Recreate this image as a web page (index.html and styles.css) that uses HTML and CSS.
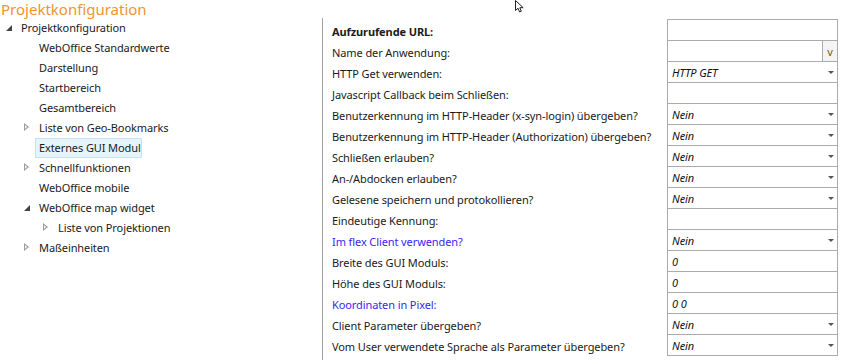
FILE: index.html
```html
<!DOCTYPE html>
<html lang="de">
<head>
<meta charset="utf-8">
<title>Projektkonfiguration</title>
<link rel="stylesheet" href="styles.css">
</head>
<body>
<div class="app">
  <h1 class="title">Projektkonfiguration</h1>
  <div class="main">
    <ul class="tree">
      <li class="node l0"><span class="exp open"></span><span class="lbl">Projektkonfiguration</span></li>
      <li class="node l1"><span class="exp"></span><span class="lbl">WebOffice Standardwerte</span></li>
      <li class="node l1"><span class="exp"></span><span class="lbl">Darstellung</span></li>
      <li class="node l1"><span class="exp"></span><span class="lbl">Startbereich</span></li>
      <li class="node l1"><span class="exp"></span><span class="lbl">Gesamtbereich</span></li>
      <li class="node l1"><span class="exp closed"></span><span class="lbl">Liste von Geo-Bookmarks</span></li>
      <li class="node l1"><span class="exp"></span><span class="lbl sel">Externes GUI Modul</span></li>
      <li class="node l1"><span class="exp closed"></span><span class="lbl">Schnellfunktionen</span></li>
      <li class="node l1"><span class="exp"></span><span class="lbl">WebOffice mobile</span></li>
      <li class="node l1"><span class="exp open"></span><span class="lbl">WebOffice map widget</span></li>
      <li class="node l2"><span class="exp closed"></span><span class="lbl">Liste von Projektionen</span></li>
      <li class="node l1"><span class="exp closed"></span><span class="lbl">Maßeinheiten</span></li>
    </ul>
    <div class="form">
      <div class="lab bold">Aufzurufende URL:</div>
      <div class="fld"></div>

      <div class="lab">Name der Anwendung:</div>
      <div class="fld"><span class="val"></span><span class="vbtn">v</span></div>

      <div class="lab">HTTP Get verwenden:</div>
      <div class="fld"><span class="val">HTTP GET</span><span class="arrow"></span></div>

      <div class="lab">Javascript Callback beim Schließen:</div>
      <div class="fld"></div>

      <div class="lab">Benutzerkennung im HTTP-Header (x-syn-login) übergeben?</div>
      <div class="fld"><span class="val">Nein</span><span class="arrow"></span></div>

      <div class="lab">Benutzerkennung im HTTP-Header (Authorization) übergeben?</div>
      <div class="fld"><span class="val">Nein</span><span class="arrow"></span></div>

      <div class="lab">Schließen erlauben?</div>
      <div class="fld"><span class="val">Nein</span><span class="arrow"></span></div>

      <div class="lab">An-/Abdocken erlauben?</div>
      <div class="fld"><span class="val">Nein</span><span class="arrow"></span></div>

      <div class="lab">Gelesene speichern und protokollieren?</div>
      <div class="fld"><span class="val">Nein</span><span class="arrow"></span></div>

      <div class="lab">Eindeutige Kennung:</div>
      <div class="fld"></div>

      <div class="lab blue">Im flex Client verwenden?</div>
      <div class="fld"><span class="val">Nein</span><span class="arrow"></span></div>

      <div class="lab">Breite des GUI Moduls:</div>
      <div class="fld"><span class="val">0</span></div>

      <div class="lab">Höhe des GUI Moduls:</div>
      <div class="fld"><span class="val">0</span></div>

      <div class="lab blue">Koordinaten in Pixel:</div>
      <div class="fld"><span class="val">0 0</span></div>

      <div class="lab">Client Parameter übergeben?</div>
      <div class="fld"><span class="val">Nein</span><span class="arrow"></span></div>

      <div class="lab">Vom User verwendete Sprache als Parameter übergeben?</div>
      <div class="fld last"><span class="val">Nein</span><span class="arrow"></span></div>
    </div>
  </div>
  <svg class="cursor" width="12" height="14" viewBox="0 0 12 14"><path d="M0.5 0.5 L0.5 10.5 L3 8.2 L4.6 12 L6.3 11.3 L4.8 7.7 L8.2 7.7 Z" fill="#fff" stroke="#222" stroke-width="1"/></svg>
</div>
</body>
</html>
```
FILE: styles.css
```css
* { box-sizing: border-box; }
html, body { margin: 0; padding: 0; background: #fff; }
body {
  font-family: "Noto Sans", "Open Sans", sans-serif;
  font-size: 11px;
  letter-spacing: -0.1px;
  color: #1a1a1a;
}
.app { position: relative; width: 841px; height: 360px; overflow: hidden; }
.title {
  margin: 0;
  height: 18px;
  padding-left: 1px;
  font-weight: normal;
  font-size: 15px;
  line-height: 18px;
  color: #ef9430;
  letter-spacing: 0;
}
.main { display: flex; height: 342px; }
.tree { list-style: none; margin: 0; padding: 0; width: 322px; flex: none; }
.node { display: flex; align-items: center; height: 20px; }
.node.l0 { padding-left: 3px; }
.node.l1 { padding-left: 21px; }
.node.l2 { padding-left: 40px; }
.exp { width: 14px; height: 20px; flex: none; position: relative; }
.exp.open::before {
  content: ""; position: absolute; left: 3px; top: 7px;
  border-style: solid; border-width: 0 0 6px 6px;
  border-color: transparent transparent #444 transparent;
}
.exp.closed::before {
  content: ""; position: absolute; left: 3px; top: 5px;
  width: 0; height: 0;
  border-style: solid; border-width: 4.5px 0 4.5px 5px;
  border-color: transparent transparent transparent #9a9a9a;
}
.exp.closed::after {
  content: ""; position: absolute; left: 4px; top: 7px;
  width: 0; height: 0;
  border-style: solid; border-width: 2.5px 0 2.5px 2.8px;
  border-color: transparent transparent transparent #fff;
}
.lbl { padding: 0 2px 0 3px; line-height: 18px; border: 1px solid transparent; white-space: nowrap; }
.lbl.sel { background: #e5f3fb; border-color: #c4e2f6; padding-right: 0; }
.form {
  flex: 1;
  border-left: 1px solid #a0a0a0;
  padding-top: 1px;
  padding-right: 3px;
  display: grid;
  grid-template-columns: minmax(0, 1fr) 171px;
  grid-auto-rows: 21px;
  align-content: start;
}
.lab { padding-left: 9px; line-height: 21px; padding-top: 2px; white-space: nowrap; }
.lab.bold { font-weight: bold; }
.lab.blue { color: #3a1ef5; }
.fld {
  border: 1px solid #ababab;
  border-bottom: none;
  display: flex;
  align-items: center;
  position: relative;
}
.fld.last { border-bottom: 1px solid #ababab; height: 22px; }
.val { flex: 1; padding-left: 4px; font-style: italic; color: #111; }
.vbtn {
  width: 15px; height: 100%;
  border-left: 1px solid #ababab;
  background: #f4f4f4;
  display: flex; align-items: center; justify-content: center;
  font-size: 11px; color: #7a5a20;
}
.arrow {
  width: 0; height: 0; margin-right: 3px;
  border-style: solid; border-width: 3px 3px 0 3px;
  border-color: #555 transparent transparent transparent;
}
.cursor { position: absolute; left: 515px; top: 0; }
```
